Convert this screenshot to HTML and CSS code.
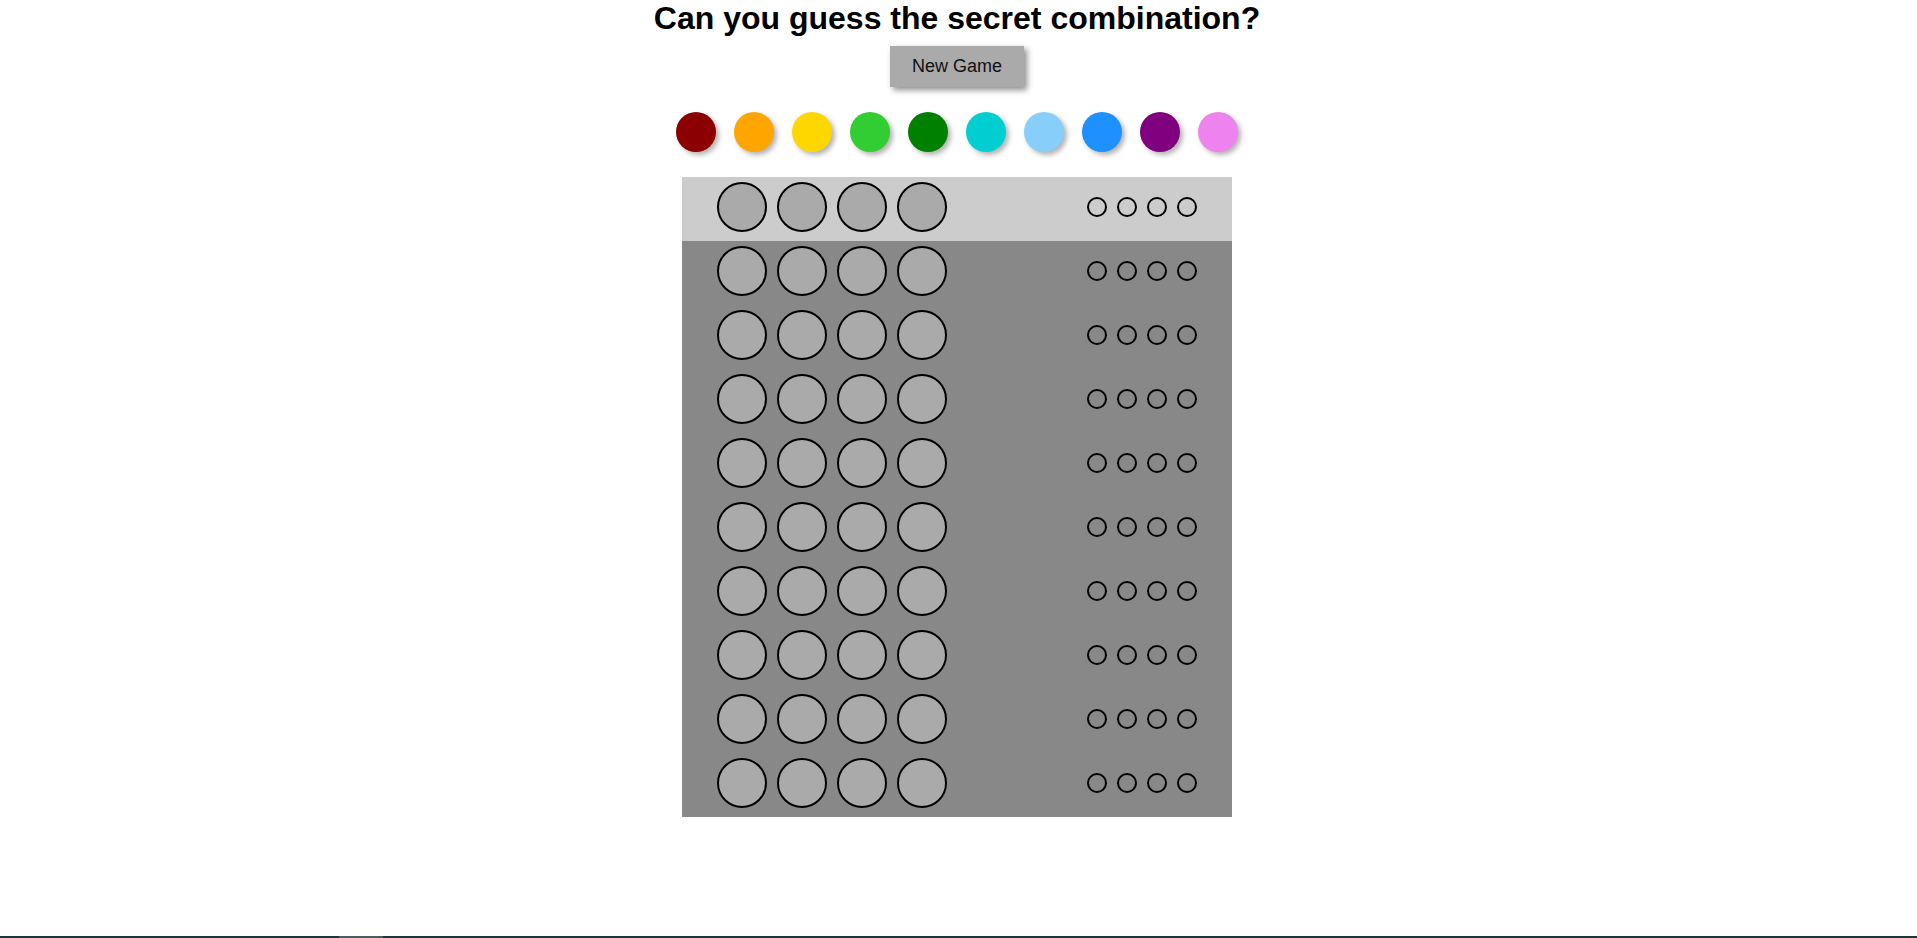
FILE: index.html
```html
<!DOCTYPE html>
<html lang="en">
<head>
<meta charset="utf-8">
<title>Mastermind</title>
<link rel="stylesheet" href="styles.css">
</head>
<body>
<main class="game">
  <h1 class="title">Can you guess the secret combination?</h1>
  <button class="new-game" type="button">New Game</button>
  <div class="palette">
    <span class="swatch c-darkred"></span>
    <span class="swatch c-orange"></span>
    <span class="swatch c-gold"></span>
    <span class="swatch c-lime"></span>
    <span class="swatch c-green"></span>
    <span class="swatch c-turq"></span>
    <span class="swatch c-sky"></span>
    <span class="swatch c-dodger"></span>
    <span class="swatch c-purple"></span>
    <span class="swatch c-violet"></span>
  </div>
  <div class="board">
    <div class="row active"><div class="guess"><span class="peg"></span><span class="peg"></span><span class="peg"></span><span class="peg"></span></div><div class="hints"><span class="hint"></span><span class="hint"></span><span class="hint"></span><span class="hint"></span></div></div>
    <div class="row"><div class="guess"><span class="peg"></span><span class="peg"></span><span class="peg"></span><span class="peg"></span></div><div class="hints"><span class="hint"></span><span class="hint"></span><span class="hint"></span><span class="hint"></span></div></div>
    <div class="row"><div class="guess"><span class="peg"></span><span class="peg"></span><span class="peg"></span><span class="peg"></span></div><div class="hints"><span class="hint"></span><span class="hint"></span><span class="hint"></span><span class="hint"></span></div></div>
    <div class="row"><div class="guess"><span class="peg"></span><span class="peg"></span><span class="peg"></span><span class="peg"></span></div><div class="hints"><span class="hint"></span><span class="hint"></span><span class="hint"></span><span class="hint"></span></div></div>
    <div class="row"><div class="guess"><span class="peg"></span><span class="peg"></span><span class="peg"></span><span class="peg"></span></div><div class="hints"><span class="hint"></span><span class="hint"></span><span class="hint"></span><span class="hint"></span></div></div>
    <div class="row"><div class="guess"><span class="peg"></span><span class="peg"></span><span class="peg"></span><span class="peg"></span></div><div class="hints"><span class="hint"></span><span class="hint"></span><span class="hint"></span><span class="hint"></span></div></div>
    <div class="row"><div class="guess"><span class="peg"></span><span class="peg"></span><span class="peg"></span><span class="peg"></span></div><div class="hints"><span class="hint"></span><span class="hint"></span><span class="hint"></span><span class="hint"></span></div></div>
    <div class="row"><div class="guess"><span class="peg"></span><span class="peg"></span><span class="peg"></span><span class="peg"></span></div><div class="hints"><span class="hint"></span><span class="hint"></span><span class="hint"></span><span class="hint"></span></div></div>
    <div class="row"><div class="guess"><span class="peg"></span><span class="peg"></span><span class="peg"></span><span class="peg"></span></div><div class="hints"><span class="hint"></span><span class="hint"></span><span class="hint"></span><span class="hint"></span></div></div>
    <div class="row"><div class="guess"><span class="peg"></span><span class="peg"></span><span class="peg"></span><span class="peg"></span></div><div class="hints"><span class="hint"></span><span class="hint"></span><span class="hint"></span><span class="hint"></span></div></div>
  </div>
</main>
<div class="bottom-bar"><span class="bar-thumb"></span></div>
</body>
</html>
```

FILE: styles.css
```css
html, body {
  margin: 0;
  padding: 0;
  height: 100%;
}

body {
  display: flex;
  flex-direction: column;
  background: #ffffff;
  font-family: "Liberation Sans", Arial, sans-serif;
  color: #000;
  padding-right: 3px;
  box-sizing: border-box;
}

.game {
  flex: 1;
  display: flex;
  flex-direction: column;
  align-items: center;
}

.title {
  margin: 0;
  font-size: 32px;
  font-weight: bold;
  line-height: 37px;
}

.new-game {
  margin-top: 9px;
  padding: 10px 22px;
  font-family: "Liberation Sans", Arial, sans-serif;
  font-size: 18px;
  line-height: 21px;
  color: #111;
  background: #aaaaaa;
  border: none;
  box-shadow: 3px 3px 6px rgba(0, 0, 0, 0.45);
}

.palette {
  display: flex;
  margin-top: 25px;
}

.swatch {
  width: 40px;
  height: 40px;
  margin: 0 9px;
  border-radius: 50%;
  box-shadow: 3px 3px 5px rgba(0, 0, 0, 0.3);
}

.c-darkred { background: #8b0000; }
.c-orange { background: #ffa500; }
.c-gold { background: #ffd700; }
.c-lime { background: #32cd32; }
.c-green { background: #008000; }
.c-turq { background: #00ced1; }
.c-sky { background: #87cefa; }
.c-dodger { background: #1e90ff; }
.c-purple { background: #800080; }
.c-violet { background: #ee82ee; }

.board {
  margin-top: 25px;
  width: 550px;
  background: #888888;
}

.row {
  display: flex;
  align-items: center;
  justify-content: space-between;
  height: 64px;
  padding: 0 35px 4px;
  box-sizing: border-box;
}

.row.active {
  background: #cccccc;
}

.guess {
  display: flex;
  gap: 10px;
}

.peg {
  width: 46px;
  height: 46px;
  border: 2px solid #000;
  border-radius: 50%;
  background: #aaaaaa;
}

.hints {
  display: flex;
  gap: 10px;
}

.hint {
  width: 16px;
  height: 16px;
  border: 2px solid #000;
  border-radius: 50%;
}

.bottom-bar {
  height: 2px;
  flex: none;
  background: #22343b;
  margin-right: -3px;
  padding-left: 339px;
}

.bar-thumb {
  display: block;
  width: 44px;
  height: 2px;
  background: #4b5b61;
}
```
